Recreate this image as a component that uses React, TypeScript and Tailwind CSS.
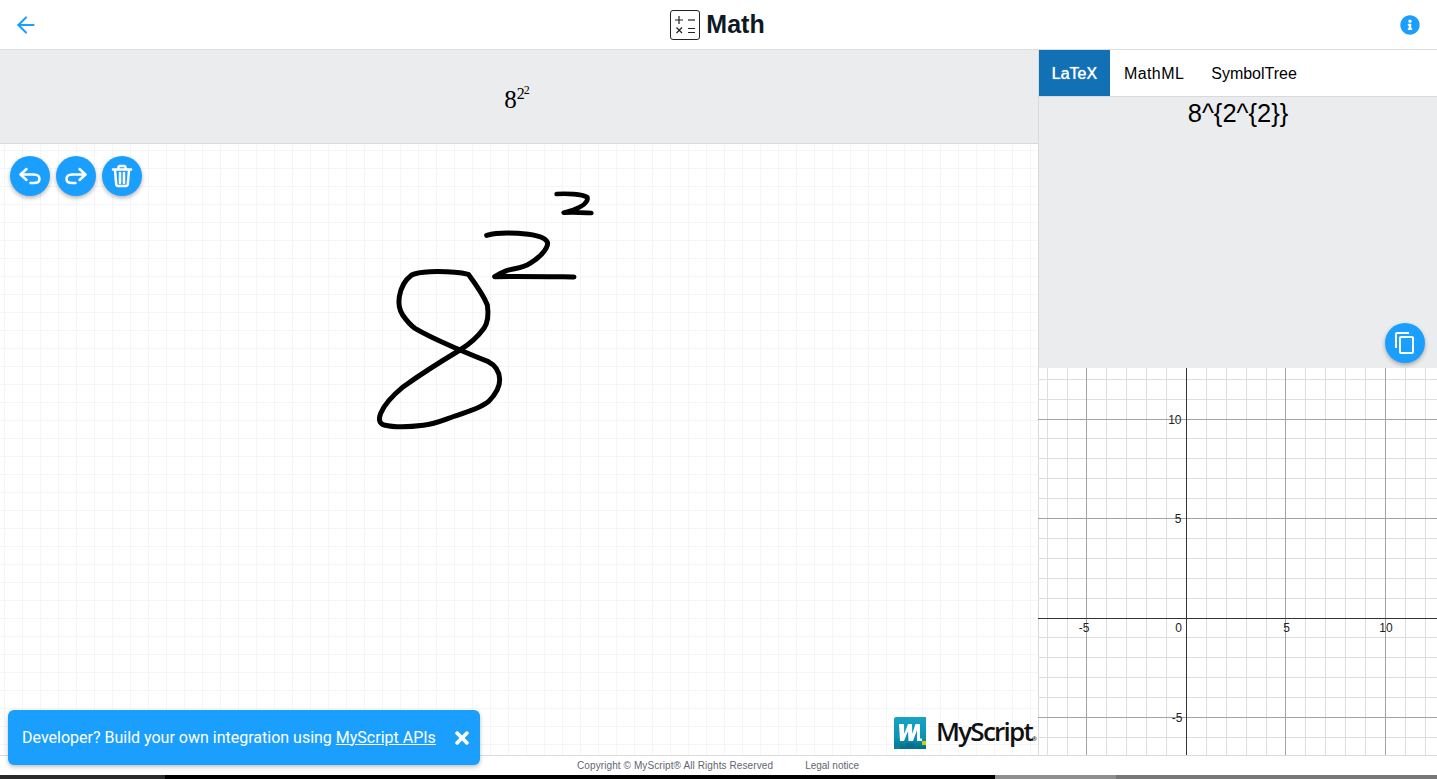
import { FaInfoCircle, FaTimes } from "react-icons/fa";
import { MdContentCopy } from "react-icons/md";
import { ArrowLeft } from "lucide-react";

const vMinor = [1047.5, 1067.5, 1106.5, 1126.5, 1146.5, 1166.5, 1206.5, 1226.5, 1246.5, 1266.5, 1305.5, 1325.5, 1345.5, 1365.5, 1405.5, 1425.5];
const vMajor = [1086.5, 1285.5, 1385.5];
const hMinor = [379.5, 399.5, 438.5, 458.5, 478.5, 498.5, 538.5, 558.5, 578.5, 598.5, 637.5, 657.5, 677.5, 697.5, 737.5];
const hMajor = [419.5, 518.5, 717.5];
const OX = 1038;
const OY = 368;

function Graph() {
  return (
    <svg width="399" height="387" viewBox="1038 368 399 387" className="block">
      {vMinor.map((x) => <line key={x} x1={x} x2={x} y1={OY} y2={755} stroke="#dedede" />)}
      {hMinor.map((y) => <line key={y} x1={OX} x2={1437} y1={y} y2={y} stroke="#dedede" />)}
      {vMajor.map((x) => <line key={x} x1={x} x2={x} y1={OY} y2={755} stroke="#a3a3a3" />)}
      {hMajor.map((y) => <line key={y} x1={OX} x2={1437} y1={y} y2={y} stroke="#a3a3a3" />)}
      <line x1={1186.5} x2={1186.5} y1={OY} y2={755} stroke="#333" />
      <line x1={OX} x2={1437} y1={618.5} y2={618.5} stroke="#333" />
      <g fontFamily="'Liberation Sans', Arial, sans-serif" fontSize="12" fill="#222">
        <text x="1181.5" y="423.5" textAnchor="end">10</text>
        <text x="1181.5" y="522.5" textAnchor="end">5</text>
        <text x="1182.5" y="721.5" textAnchor="end">-5</text>
        <text x="1084" y="632" textAnchor="middle">-5</text>
        <text x="1178.5" y="632" textAnchor="middle">0</text>
        <text x="1286.5" y="632" textAnchor="middle">5</text>
        <text x="1386" y="632" textAnchor="middle">10</text>
      </g>
    </svg>
  );
}

function Ink() {
  return (
    <svg
      width="250"
      height="260"
      viewBox="0 0 750 780"
      className="absolute left-[360px] top-[36px]"
      fill="none"
      stroke="#000"
      strokeWidth="15"
      strokeLinecap="round"
      strokeLinejoin="round"
    >
      <path d="M325 283 C295 276 250 274 210 275 C190 276 170 277 155 285 C135 300 122 325 118 350 C115 370 118 390 128 405 C140 422 150 435 165 445 C210 472 260 492 300 510 C330 523 360 535 385 545 C405 555 418 575 419 598 C420 625 405 645 385 665 C360 685 320 697 285 708 C250 720 225 732 190 736 C150 741 100 742 72 735 C58 730 55 718 62 700 C72 675 100 645 130 620 C165 595 225 555 300 510 C325 495 350 475 372 445 C385 425 385 395 382 375 C370 345 345 310 325 283 Z" />
      <path d="M380 166 C410 158 460 158 505 163 C535 167 560 175 563 190 C562 210 535 235 510 250 C490 265 460 265 440 272 C425 278 412 285 404 290 C470 288 570 290 642 291" />
      <path d="M590 42 C620 40 665 42 682 52 C686 68 660 82 640 90 C625 94 612 97 611 98 C640 96 670 98 694 99" strokeWidth="14" />
    </svg>
  );
}

function RoundButton({ children }: { children: React.ReactNode }) {
  return (
    <button className="flex h-10 w-10 items-center justify-center rounded-full bg-[#1a9fff] text-white shadow-[0_2px_4px_rgba(0,0,0,0.3)]">
      {children}
    </button>
  );
}

function UndoIcon({ flip }: { flip?: boolean }) {
  return (
    <svg width="24" height="24" viewBox="0 0 24 24" fill="none" stroke="#fff" strokeWidth="2.5" strokeLinecap="round" strokeLinejoin="round" className={flip ? "-scale-x-100" : ""}>
      <path d="M8.5 5 L2.5 10.5 L8.5 16" />
      <path d="M3 10.5 H16 C19.5 10.5 21.5 12.5 21.5 15 C21.5 17.5 19.5 19 16 19 H12.5" />
    </svg>
  );
}

function TrashIcon() {
  return (
    <svg width="24" height="24" viewBox="0 0 24 24" fill="none" stroke="#fff" strokeWidth="2.5" strokeLinecap="round" strokeLinejoin="round">
      <path d="M3 5.5 H21" />
      <path d="M8.5 5 V3.5 C8.5 2.5 9 2 10 2 H14 C15 2 15.5 2.5 15.5 3.5 V5" />
      <path d="M5 6 L6.2 20 C6.3 21.2 7 22 8 22 H16 C17 22 17.7 21.2 17.8 20 L19 6" />
      <path d="M10 9 V19 M14 9 V19" />
    </svg>
  );
}

function MathLogo() {
  return (
    <svg width="30" height="30" viewBox="0 0 30 30" fill="none" stroke="#222" className="shrink-0">
      <rect x="0.5" y="0.5" width="29" height="29" rx="2.5" strokeWidth="1" />
      <g strokeWidth="1.2">
        <path d="M5 10 H13 M9 6 V14" />
        <path d="M18 10 H25" />
        <path d="M6.5 17.5 L12 23 M12 17.5 L6.5 23" />
        <path d="M18 18.5 H25 M18 22.5 H25" />
      </g>
    </svg>
  );
}

function MyScriptMark() {
  return (
    <svg width="32" height="32" viewBox="0 0 32 32" className="shrink-0">
      <defs>
        <linearGradient id="ms" x1="0" y1="0" x2="0" y2="1">
          <stop offset="0" stopColor="#18a3c4" />
          <stop offset="0.65" stopColor="#0a93b2" />
          <stop offset="1" stopColor="#046c88" />
        </linearGradient>
      </defs>
      <path d="M2 0 H32 V32 H2 C1 32 0 31 0 30 V2 C0 1 1 0 2 0 Z" fill="url(#ms)" />
      <rect x="0" y="26" width="6" height="6" fill="#0a7f9c" />
      <rect x="12" y="26" width="8" height="6" fill="#056f8c" />
      <path d="M5 7 H10 L10.2 17 L14 7 H18 L18.2 17 L21.5 7 H26 V21.5 H28 V24 H23 V13 L19 24 H14.5 L14 14 L10 24 H6 Z" fill="#fff" />
      <rect x="28" y="24" width="4" height="4" fill="#c6d400" />
    </svg>
  );
}

export default function App() {
  return (
    <div className="relative flex h-[779px] w-[1437px] flex-col overflow-hidden bg-white font-['Liberation_Sans',Arial,sans-serif] text-black">
      <header className="flex h-[50px] shrink-0 items-center justify-between border-b border-[#dcdcdc] pl-[13px] pr-[17px]">
        <ArrowLeft size={26} strokeWidth={1.9} color="#1a9fff" />
        <div className="flex items-center gap-[6px] pr-[4px]">
          <MathLogo />
          <span className="text-[25px] font-bold leading-none text-[#0d1a26]">Math</span>
        </div>
        <FaInfoCircle size={20} color="#1a9fff" />
      </header>

      <main className="flex min-h-0 flex-1">
        <section className="flex w-[1038px] shrink-0 flex-col">
          <div className="flex h-[94px] shrink-0 items-center justify-center border-b border-[#d8d9db] bg-[#ebecee] pr-[4px] font-['Liberation_Serif',serif]">
            <span className="relative top-[3px] text-[25px] leading-none">
              8<span className="relative -top-[9px] text-[16px]">2</span>
              <span className="relative -top-[14px] -ml-[1px] text-[12px]">2</span>
            </span>
          </div>
          <div className="relative min-h-0 flex-1 bg-white bg-[linear-gradient(#f4f5f6_1px,transparent_1px),linear-gradient(90deg,#f4f5f6_1px,transparent_1px)] bg-[size:18px_18px] bg-[position:4px_6px]">
            <div className="flex gap-[6px] pl-[10px] pt-[12px]">
              <RoundButton><UndoIcon /></RoundButton>
              <RoundButton><UndoIcon flip /></RoundButton>
              <RoundButton><TrashIcon /></RoundButton>
            </div>
            <Ink />
            <div className="absolute bottom-[6px] right-[1px] flex items-center gap-[10px]">
              <MyScriptMark />
              <span className="-translate-y-[2px] font-['Open_Sans',sans-serif] text-[26px] font-semibold leading-none tracking-[-1.75px] text-[#111]">
                MyScript<span className="text-[6px] tracking-normal">®</span>
              </span>
            </div>
          </div>
        </section>

        <aside className="flex min-w-0 flex-1 flex-col border-l border-[#d8d9db]">
          <nav className="flex h-[47px] shrink-0 border-b border-[#d8d9db] pt-[1px] text-[16px]">
            <a className="-mt-[1px] flex w-[71px] items-center justify-center bg-[#1271b5] pt-[1px] text-white [text-shadow:0_0_1px_#fff]">LaTeX</a>
            <a className="flex items-center pl-[14px] tracking-[0.4px]">MathML</a>
            <a className="flex items-center pl-[27px]">SymbolTree</a>
          </nav>
          <div className="relative h-[271px] shrink-0 bg-[#ebecee] text-center text-[25.5px] leading-[32px]">
            8^&#123;2^&#123;2&#125;&#125;
            <div className="absolute bottom-[5px] right-[12px]">
              <RoundButton><MdContentCopy size={24} /></RoundButton>
            </div>
          </div>
          <div className="-ml-px min-h-0 flex-1 overflow-hidden">
            <Graph />
          </div>
        </aside>
      </main>

      <footer className="relative flex h-[20px] shrink-0 items-center border-t border-[#dcdcdc] pl-[577px] text-[10px] text-[#5f6670]">
        <span className="tracking-[0.1px]">Copyright © MyScript® All Rights Reserved</span>
        <span className="ml-[32px]">Legal notice</span>
      </footer>
      <div className="flex h-[4px] shrink-0">
        <div className="w-[165px] bg-[#2a2a2a]" />
        <div className="w-[830px] bg-black" />
        <div className="w-[121px] bg-[#8f8f8f]" />
        <div className="flex-1 bg-[#777777]" />
      </div>

      <div className="absolute bottom-[14px] left-[8px] flex h-[55px] w-[472px] items-center rounded-[6px] bg-[#1a9fff] pl-[14px] font-['Roboto',sans-serif] text-[16px] text-white shadow-[0_2px_4px_rgba(0,0,0,0.25)]">
        <span>
          Developer? Build your own integration using <a className="underline">MyScript APIs</a>
        </span>
        <FaTimes size={20} className="absolute right-[8px] top-[18px]" />
      </div>
    </div>
  );
}
